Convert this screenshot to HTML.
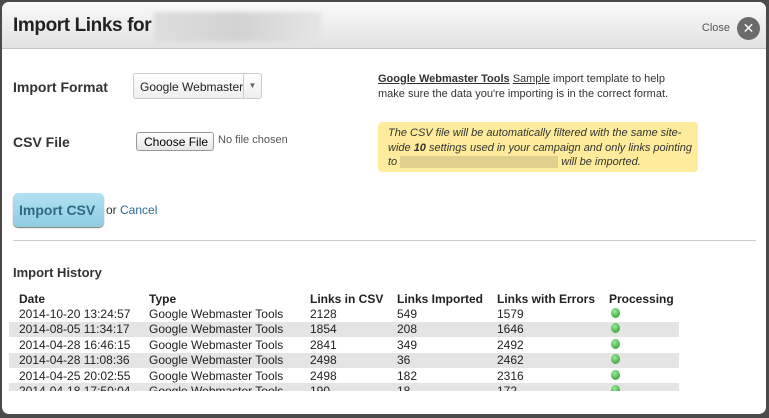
<!DOCTYPE html>
<html><head><style>
*{margin:0;padding:0;box-sizing:border-box}
body{width:769px;height:418px;background:#4a4a4a;font-family:"Liberation Sans",Arial,sans-serif;position:relative;overflow:hidden}
.dlg{position:absolute;left:2px;top:2px;width:764px;height:412px;background:#fff;border-radius:7px;overflow:hidden}
.hd{position:absolute;left:0;top:0;width:100%;height:47px;background:linear-gradient(#fafafa,#e2e2e2);border-bottom:1px solid #c4c4c4}
.t{position:absolute;left:11px;top:13px;font-size:19px;font-weight:bold;color:#222;letter-spacing:-0.4px}
.blur{position:absolute;left:152px;top:10px;width:168px;height:30px;background:linear-gradient(90deg,#ddd,#d2d2d2,#e6e6e6);filter:blur(2px)}
.close{position:absolute;right:36px;top:20px;font-size:11px;color:#555}
.cx{position:absolute;right:6px;top:15px;width:23px;height:23px;border-radius:50%;background:#6b6b6b;color:#fff;font-size:14px;text-align:center;line-height:22px}
.a{position:absolute;white-space:nowrap}
.lbl{font-size:14px;font-weight:bold;color:#333}
.sel{left:131px;top:71px;width:129px;height:26px;border:1px solid #ccc;border-radius:3px;background:linear-gradient(#fff,#eee);font-size:12px;color:#222;padding:6px 0 0 6px}
.sel .ar{position:absolute;right:0;top:0;width:18px;height:24px;border-left:1px solid #ccc;font-size:8px;color:#666;text-align:center;line-height:24px}
.small{font-size:11px;color:#333;line-height:15px}
.yel{left:376px;top:120px;width:320px;height:50px;background:#feeb9b;border-radius:4px;font-size:11px;font-style:italic;color:#333;line-height:14.5px;padding:4px 0 0 10px;white-space:normal}
.btn{left:11px;top:191px;width:91px;height:34px;border-radius:5px;background:linear-gradient(#b2e1f2,#8ecce2);box-shadow:0 1px 1px #777;font-size:14px;font-weight:bold;color:#2e6a84;padding:9px 0 0 6px}
table{position:absolute;border-collapse:collapse;font-size:12px;color:#222}
td,th{height:15.4px;padding:0 0 0 10px;text-align:left;white-space:nowrap}
th{font-weight:bold}
tr.g{background:#e4e4e4}
.dot{display:inline-block;width:9px;height:10px;border-radius:50%;background:radial-gradient(circle at 40% 35%,#9e9,#4a4 70%);margin-left:2px}
.clip{position:absolute;left:0;top:289px;width:700px;height:100px;overflow:hidden}
</style></head><body>
<div class="dlg">
<div class="hd"><div class="t">Import Links for</div><div class="blur"></div><div class="close">Close</div><div class="cx">✕</div></div>
<div class="a lbl" style="left:11px;top:77px">Import Format</div>
<div class="a sel">Google Webmaster<div class="ar">▼</div></div>
<div class="a small" style="left:376px;top:70px"><b style="text-decoration:underline">Google Webmaster Tools</b> <u>Sample</u> import template to help<br>make sure the data you're importing is in the correct format.</div>
<div class="a lbl" style="left:11px;top:132px">CSV File</div>
<div class="a" style="left:134px;top:130px;width:78px;height:19px;border:1px solid #999;border-radius:3px;background:linear-gradient(#fff,#e6e6e6);font-size:12px;padding:2px 0 0 7px">Choose File</div>
<div class="a" style="left:216px;top:132px;font-size:11px;color:#555">No file chosen</div>
<div class="a yel">The CSV file will be automatically filtered with the same site-wide <b>10</b> settings used in your campaign and only links pointing to <span style="display:inline-block;width:158px;height:12px;background:#e0d08e;vertical-align:middle"></span> will be imported.</div>
<div class="a btn">Import CSV</div>
<div class="a" style="left:104px;top:201px;font-size:12px;color:#333">or <span style="color:#2a6a90">Cancel</span></div>
<div class="a" style="left:11px;top:238px;width:743px;height:1px;background:#ccc"></div>
<div class="a lbl" style="left:11px;top:263px;font-size:13px">Import History</div>
<div class="clip"><table style="left:7px;top:0">
<tr><th style="width:130px">Date</th><th style="width:161px">Type</th><th style="width:87px">Links in CSV</th><th style="width:100px">Links Imported</th><th style="width:112px">Links with Errors</th><th style="width:80px">Processing</th></tr>
<tr><td>2014-10-20 13:24:57</td><td>Google Webmaster Tools</td><td>2128</td><td>549</td><td>1579</td><td><span class="dot"></span></td></tr>
<tr class="g"><td>2014-08-05 11:34:17</td><td>Google Webmaster Tools</td><td>1854</td><td>208</td><td>1646</td><td><span class="dot"></span></td></tr>
<tr><td>2014-04-28 16:46:15</td><td>Google Webmaster Tools</td><td>2841</td><td>349</td><td>2492</td><td><span class="dot"></span></td></tr>
<tr class="g"><td>2014-04-28 11:08:36</td><td>Google Webmaster Tools</td><td>2498</td><td>36</td><td>2462</td><td><span class="dot"></span></td></tr>
<tr><td>2014-04-25 20:02:55</td><td>Google Webmaster Tools</td><td>2498</td><td>182</td><td>2316</td><td><span class="dot"></span></td></tr>
<tr class="g"><td>2014-04-18 17:50:04</td><td>Google Webmaster Tools</td><td>190</td><td>18</td><td>172</td><td><span class="dot"></span></td></tr>
</table></div>
</div>
</body></html>
